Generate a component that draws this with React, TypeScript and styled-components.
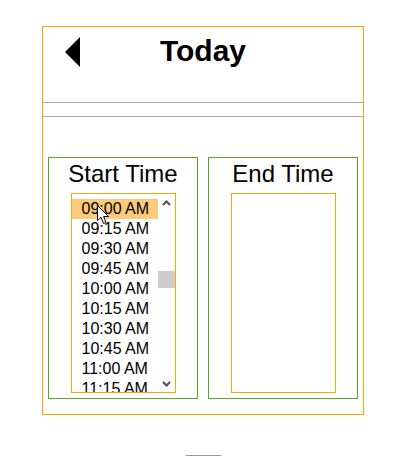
import React from "react";
import styled, { createGlobalStyle } from "styled-components";

const GlobalStyle = createGlobalStyle`
  html, body {
    margin: 0;
    padding: 0;
    overflow: hidden;
    background: #ffffff;
  }
  body {
    font-family: "Liberation Sans", Arial, sans-serif;
    color: #000;
  }
`;

const Page = styled.div`
  padding: 26px 0 0 42px;
  width: 322px;
`;

const Card = styled.div`
  box-sizing: border-box;
  width: 322px;
  height: 389px;
  border: 1px solid #ffa500;
  display: flex;
  flex-direction: column;
`;

const Header = styled.div`
  height: 75px;
  box-sizing: border-box;
  padding: 7px 22px 0;
  display: grid;
  grid-template-columns: 1fr auto 1fr;
  align-items: start;
`;

const BackButton = styled.button`
  justify-self: start;
  margin-top: 3px;
  padding: 0;
  border: 0;
  background: none;
  width: 15px;
  height: 30px;
  display: block;
  cursor: pointer;
`;

const Title = styled.h1`
  margin: 0;
  font-size: 30px;
  line-height: 34px;
  font-weight: 700;
`;

const Divider = styled.div`
  height: 1px;
  background: #aaaaaa;
`;

const Gap = styled.div<{ $h: number }>`
  height: ${(p) => p.$h}px;
`;

const Columns = styled.div`
  display: flex;
  gap: 10px;
  padding: 40px 5px 0;
`;

const Column = styled.div`
  box-sizing: border-box;
  width: 150px;
  height: 242px;
  border: 1px solid #5aa52a;
  display: flex;
  flex-direction: column;
  align-items: center;
`;

const ColumnTitle = styled.h2`
  margin: 2px 0 6px;
  font-size: 24px;
  line-height: 27px;
  font-weight: 400;
`;

const ListBox = styled.div`
  position: relative;
  box-sizing: border-box;
  width: 105px;
  height: 200px;
  border: 1px solid #ffa500;
  display: flex;
  overflow: hidden;
`;

const Viewport = styled.div`
  flex: 1;
  overflow: hidden;
`;

const Options = styled.div<{ $offset: number }>`
  margin-top: ${(p) => -p.$offset}px;
`;

const Option = styled.div<{ $selected?: boolean }>`
  height: 20px;
  line-height: 20px;
  padding-left: 10px;
  font-size: 16px;
  white-space: nowrap;
  background: ${(p) => (p.$selected ? "#fdc97b" : "transparent")};
`;

const Scrollbar = styled.div`
  width: 17px;
  display: flex;
  flex-direction: column;
`;

const ArrowButton = styled.div`
  height: 17px;
  display: flex;
  align-items: center;
  justify-content: center;
`;

const Track = styled.div`
  flex: 1;
  position: relative;
`;

const Thumb = styled.div<{ $top: number }>`
  position: absolute;
  left: 0;
  right: 0;
  top: ${(p) => p.$top}px;
  height: 17px;
  background: #cdcdcd;
`;

const Cursor = styled.svg`
  position: absolute;
  left: 25px;
  top: 11px;
  pointer-events: none;
`;

const BottomBar = styled.div`
  width: 37px;
  height: 4px;
  margin: 40px 0 0 143px;
  background: #999999;
  border-radius: 2px;
`;

const times = [
  "08:45 AM",
  "09:00 AM",
  "09:15 AM",
  "09:30 AM",
  "09:45 AM",
  "10:00 AM",
  "10:15 AM",
  "10:30 AM",
  "10:45 AM",
  "11:00 AM",
  "11:15 AM",
  "11:30 AM",
];

const Chevron: React.FC<{ up?: boolean }> = ({ up }) => (
  <svg width="9" height="6" viewBox="0 0 9 6">
    <path
      d={up ? "M1 5 L4.5 1.5 L8 5" : "M1 1 L4.5 4.5 L8 1"}
      fill="none"
      stroke="#505050"
      strokeWidth="2"
    />
  </svg>
);

export default function App() {
  return (
    <>
      <GlobalStyle />
      <Page>
        <Card>
          <Header>
            <BackButton aria-label="Back">
              <svg width="15" height="30" viewBox="0 0 15 30">
                <polygon points="15,0 0,15 15,30" fill="#000" />
              </svg>
            </BackButton>
            <Title>Today</Title>
            <span />
          </Header>
          <Divider />
          <Gap $h={13} />
          <Divider />
          <Columns>
            <Column>
              <ColumnTitle>Start Time</ColumnTitle>
              <ListBox>
                <Viewport>
                  <Options $offset={15}>
                    {times.map((t) => (
                      <Option key={t} $selected={t === "09:00 AM"}>
                        {t}
                      </Option>
                    ))}
                  </Options>
                </Viewport>
                <Scrollbar>
                  <ArrowButton>
                    <Chevron up />
                  </ArrowButton>
                  <Track>
                    <Thumb $top={60} />
                  </Track>
                  <ArrowButton>
                    <Chevron />
                  </ArrowButton>
                </Scrollbar>
                <Cursor width="13" height="20" viewBox="0 0 13 20">
                  <path
                    d="M0.5 0.5 L0.5 15.5 L4 12.2 L6.5 18.5 L9 17.5 L6.6 11.5 L11.5 11.5 Z"
                    fill="#fff"
                    stroke="#000"
                    strokeWidth="1"
                    strokeLinejoin="round"
                  />
                </Cursor>
              </ListBox>
            </Column>
            <Column>
              <ColumnTitle>End Time</ColumnTitle>
              <ListBox />
            </Column>
          </Columns>
        </Card>
        <BottomBar />
      </Page>
    </>
  );
}
